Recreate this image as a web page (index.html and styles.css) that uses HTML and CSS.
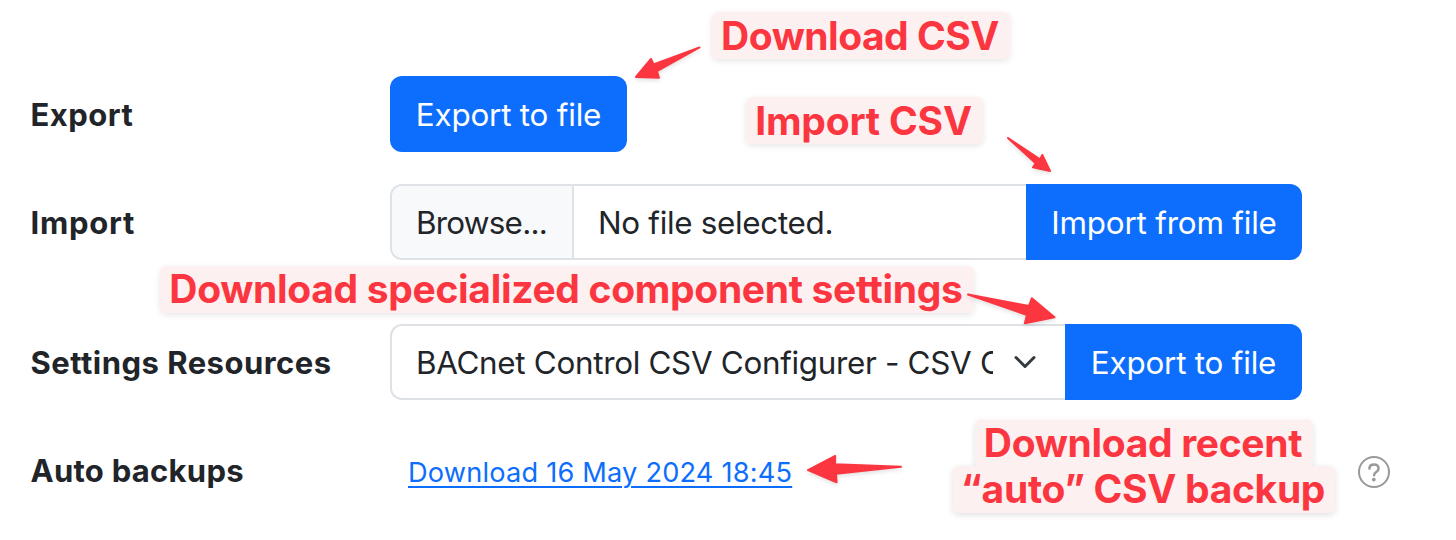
FILE: index.html
```
<!DOCTYPE html>
<html lang="en">
<head>
<meta charset="utf-8">
<title>Export and import settings</title>
<link rel="stylesheet" href="styles.css">
</head>
<body>
<main class="settings">
  <div class="row">
    <div class="label label-export">Export</div>
    <button class="btn btn-export">Export to file</button>
  </div>
  <div class="row">
    <div class="label label-import">Import</div>
    <div class="group">
      <div class="file">
        <span class="browse">Browse...</span>
        <span class="filename">No file selected.</span>
      </div>
      <button class="btn btn-import btn-end">Import from file</button>
    </div>
  </div>
  <div class="row row-resources">
    <div class="label label-resources">Settings Resources</div>
    <div class="group">
      <div class="select">
        <span class="value">BACnet Control CSV Configurer - CSV C</span>
        <svg class="chevron" viewBox="0 0 16 16"><path d="m2 5 6 6 6-6"/></svg>
      </div>
      <button class="btn btn-export btn-end">Export to file</button>
    </div>
  </div>
  <div class="row">
    <div class="label label-backups">Auto backups</div>
    <a class="link" href="#">Download 16 May 2024 18:45</a>
    <svg class="help" viewBox="0 0 32 32"><circle cx="16" cy="16" r="15"/><path d="M11.4 12.6C11.5 9.9 13.3 8.4 16 8.4s4.6 1.6 4.6 3.9c0 1.8-.9 2.8-2.3 3.7-1.6 1-2.2 1.6-2.2 3.2"/><circle class="dot" cx="15.8" cy="23.6" r="1.9"/></svg>
  </div>
</main>

<div class="note note-download"><span>Download CSV</span></div>
<div class="note note-import"><span>Import CSV</span></div>
<div class="note note-component"><span>Download specialized component settings</span></div>
<div class="note note-recent note-back"><span class="first"></span><span class="second"></span></div>
<div class="note note-recent"><span class="first">Download recent</span><span class="second">“auto” CSV backup</span></div>

<svg class="arrows" viewBox="0 0 1456 540">
  <path d="M699.5 47.5 653.5 64.5 651 59 636 77 659 77.7 657 71.2Z"/>
  <path d="M1008 138 1040 159.4 1042.3 155 1050 171 1033 167.3 1035.7 163.3Z"/>
  <path d="M968 294.5 1029 306 1031.8 298.3 1054.5 317.3 1024.8 323.2 1027 315Z"/>
  <path d="M901 466.8 835 464.3 835.2 456 808 470.2 836.6 482.3 836 473.7Z"/>
</svg>
</body>
</html>
```
FILE: styles.css
```
* { box-sizing: border-box; }
body {
  position: relative;
  width: 1456px;
  height: 540px;
  margin: 0;
  overflow: hidden;
  background: #fff;
  color: #212529;
  font: 400 31.4px/48px Inter, "Liberation Sans", sans-serif;
  letter-spacing: -.31px;
  white-space: nowrap;
}
.settings {
  display: flex;
  flex-direction: column;
  gap: 32px;
  padding: 76px 66px 0 30px;
}
.row { display: flex; align-items: center; height: 76px; }
.row-resources { margin-top: 32px; }
.label {
  width: 360px;
  padding: 1px 0 0 .5px;
  font-size: 31px;
  font-weight: 700;
  letter-spacing: .48px;
}
.label-import { letter-spacing: .75px; }
.label-backups { letter-spacing: .27px; }
.btn {
  flex: none;
  width: 237px;
  height: 76px;
  padding: 1px 0 0;
  border: 0;
  border-radius: 12px;
  background: #0d6efd;
  color: #fff;
  font: inherit;
  letter-spacing: -.2px;
}
.btn-import { width: 276px; }
.btn-end { border-radius: 0 12px 12px 0; }
.group { display: flex; width: 912px; }
.file, .select {
  display: flex;
  flex: 1;
  min-width: 0;
  height: 76px;
  border: 2px solid #dee2e6;
  border-right: 0;
  border-radius: 12px 0 0 12px;
  overflow: hidden;
}
.browse {
  width: 182px;
  padding: 13px 0 0 24px;
  border-right: 2px solid #dee2e6;
  background: #f8f9fa;
  letter-spacing: -.75px;
}
.filename { padding: 13px 0 0 24px; }
.select { align-items: center; padding-left: 24px; }
.value { width: 577px; padding-top: 1px; overflow: hidden; }
.chevron {
  width: 24px;
  height: 24px;
  margin-left: 20px;
  fill: none;
  stroke: #343a40;
  stroke-width: 2;
  stroke-linecap: round;
  stroke-linejoin: round;
}
.link {
  margin: 5px 0 0 18px;
  color: #0d6efd;
  font-size: 27.2px;
  letter-spacing: .19px;
  text-decoration-thickness: 2px;
  text-underline-offset: 4px;
}
.help {
  width: 32px;
  height: 32px;
  margin: 4px 0 0 auto;
  fill: none;
  stroke: #999;
  stroke-width: 2;
}
.help path { stroke-width: 2.5; stroke-linecap: round; }
.help .dot { fill: #999; stroke: none; }

.note {
  position: absolute;
  color: #fb3640;
  font-size: 39px;
  font-weight: 650;
  letter-spacing: -.32px;
  line-height: 46px;
  text-align: center;
}
.note span {
  display: block;
  height: 47px;
  padding-right: 2px;
  border-radius: 6px;
  background: #fdf0f0;
}
.note-download, .note-import, .note-component {
  border-radius: 6px;
  box-shadow: 0 2px 6px rgba(0, 0, 0, .1);
}
.note-download { left: 712px; top: 12px; width: 298px; letter-spacing: -.5px; line-height: 48px; }
.note-import { left: 746px; top: 97px; width: 237px; letter-spacing: -.2px; line-height: 48px; }
.note-component { left: 160px; top: 266px; width: 814px; }
.note-recent { left: 953px; top: 420px; width: 382px; }
.note-recent .first { width: 338px; margin: 0 auto; }
.note-recent .second { margin-top: -1px; }
.note-back { filter: drop-shadow(0 2px 3px rgba(0, 0, 0, .12)); }
.arrows {
  position: absolute;
  inset: 0;
  width: 1456px;
  height: 540px;
  fill: #fb3640;
  stroke: #fb3640;
  stroke-width: 2;
  stroke-linejoin: round;
  filter: drop-shadow(0 2px 2px rgba(0, 0, 0, .12));
}
```
